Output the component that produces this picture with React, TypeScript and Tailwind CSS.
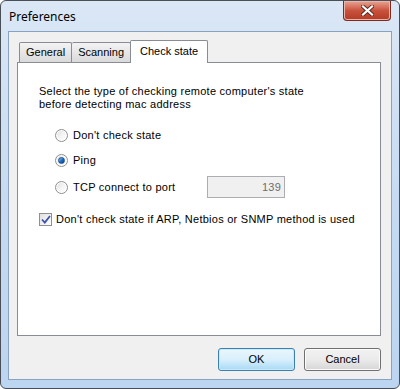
import { useState } from 'react'

// Win7 "Windows Basic" style Preferences dialog, Check state tab open.
const font = { fontFamily: '"Liberation Sans", Arial, sans-serif' }

type Mode = 'none' | 'ping' | 'tcp'

function Radio({ checked, label, onClick }: { checked: boolean; label: string; onClick: () => void }) {
  return (
    <button onClick={onClick} className="flex items-center gap-[5px] text-[11px] text-black h-[14px] tracking-[0.25px]">
      <span className="w-[13px] h-[13px] rounded-full border border-[#8f8f8f] bg-gradient-to-br from-[#dcdcdc] via-[#f4f4f4] to-[#ffffff] flex items-center justify-center shadow-[inset_0_0_0_1px_#ffffff]">
        {checked && (
          <span className="w-[7px] h-[7px] rounded-full bg-gradient-to-br from-[#8fd0f5] via-[#1f6fc4] to-[#0a3e8a] border border-[#1c4f8e]" />
        )}
      </span>
      <span>{label}</span>
    </button>
  )
}

export default function App() {
  const [mode, setMode] = useState<Mode>('ping')
  const [skip, setSkip] = useState(true)

  return (
    <div className="w-[400px] h-[389px] bg-white select-none" style={font}>
      <div className="w-full h-full flex flex-col rounded-[6px] border border-[#4a4f57] bg-gradient-to-b from-[#dbe7f5] via-[#c6dbf2] to-[#bcd5f0] px-[7px] pb-[8px]">
        {/* title bar */}
        <div className="h-[30px] flex items-start justify-between">
          <span
            className="mt-[7px] ml-[1px] text-[12px] text-black"
            style={{ fontFamily: '"Noto Sans", "Open Sans", sans-serif' }}
          >
            Preferences
          </span>
          <button className="w-[48px] h-[20px] mr-[1px] rounded-b-[4px] border border-t-0 border-[#7a2a20] bg-gradient-to-b from-[#e8a493] via-[#c9523d] to-[#b33a25] flex items-center justify-center shadow-[inset_0_0_0_1px_#eab5a8]">
            <svg width="13" height="11" viewBox="0 0 13 11">
              <path d="M2 1.5 L11 9.5 M11 1.5 L2 9.5" stroke="#5a2a22" strokeWidth="4" strokeLinecap="square" />
              <path d="M2 1.5 L11 9.5 M11 1.5 L2 9.5" stroke="#ffffff" strokeWidth="2.2" strokeLinecap="square" />
            </svg>
          </button>
        </div>

        {/* client area */}
        <div className="flex-1 flex flex-col bg-[#f0f0f0] border border-[#8ba3c2] pl-[8px] pr-[10px] pt-[8px] pb-[8px]">
          {/* tabs */}
          <div className="flex items-end h-[22px] pl-[2px] text-[11px] text-black">
            <div className="h-[20px] px-[6px] flex items-center border border-b-0 border-[#898c95] bg-gradient-to-b from-[#f3f3f3] to-[#dadada] rounded-t-[2px]">
              General
            </div>
            <div className="h-[20px] px-[6px] flex items-center border border-b-0 border-l-0 border-[#898c95] bg-gradient-to-b from-[#f3f3f3] to-[#dadada] rounded-t-[2px]">
              Scanning
            </div>
            <div className="relative -mb-px h-[23px] w-[78px] pb-[2px] flex items-center justify-center border border-b-0 border-[#898c95] bg-white rounded-t-[2px] z-10 -ml-px">
              Check state
            </div>
          </div>

          {/* panel */}
          <div className="h-[274px] bg-white border border-[#898c95] pl-[21px] pt-[22px] text-[11px] text-black leading-[13px] tracking-[0.25px]">
            <p>Select the type of checking remote computer's state</p>
            <p>before detecting mac address</p>

            <div className="mt-[17px] ml-[16px] flex flex-col">
              <Radio checked={mode === 'none'} label="Don't check state" onClick={() => setMode('none')} />
              <div className="mt-[11px]">
                <Radio checked={mode === 'ping'} label="Ping" onClick={() => setMode('ping')} />
              </div>
              <div className="mt-[9px] flex items-center h-[22px]">
                <div className="w-[152px]">
                  <Radio checked={mode === 'tcp'} label="TCP connect to port" onClick={() => setMode('tcp')} />
                </div>
                <input
                  disabled
                  defaultValue="139"
                  className="w-[78px] h-[22px] border border-[#abadb3] bg-[#f0f0f0] text-right pr-[3px] text-[11px] text-[#6d6d6d]"
                  style={font}
                />
              </div>
            </div>

            <button
              onClick={() => setSkip(!skip)}
              className="mt-[14px] flex items-center gap-[4px] h-[14px] tracking-[0.25px]"
            >
              <span className="w-[13px] h-[13px] border border-[#8f8f8f] bg-gradient-to-br from-[#e0e0e0] to-[#ffffff] flex items-center justify-center">
                {skip && (
                  <svg width="10" height="9" viewBox="0 0 10 9">
                    <path d="M1 4.5 L3.8 7.5 L9 1" fill="none" stroke="#3a52a8" strokeWidth="1.8" />
                  </svg>
                )}
              </span>
              <span>Don't check state if ARP, Netbios or SNMP method is used</span>
            </button>
          </div>

          {/* buttons */}
          <div className="mt-[12px] flex justify-end gap-[9px] text-[11px] text-black">
            <button className="w-[77px] h-[23px] rounded-[3px] border border-[#3c7fb1] bg-gradient-to-b from-[#eaf6fd] via-[#d9f0fc] to-[#a7d9f5] shadow-[inset_0_0_0_1px_#c7ebfb]">
              OK
            </button>
            <button className="w-[77px] h-[23px] rounded-[3px] border border-[#707070] bg-gradient-to-b from-[#f2f2f2] via-[#ebebeb] to-[#d6d6d6] shadow-[inset_0_0_0_1px_#fbfbfb]">
              Cancel
            </button>
          </div>
        </div>
      </div>
    </div>
  )
}
